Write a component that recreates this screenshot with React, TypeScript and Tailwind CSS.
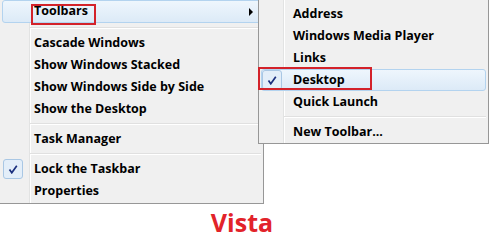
import type { ReactNode } from "react";

const gutterLeft =
  "bg-[linear-gradient(to_right,#f0f0f0_29px,#e2e3e3_29px,#e2e3e3_30px,#ffffff_30px,#ffffff_31px,#f0f0f0_31px)]";
const gutterSub =
  "bg-[linear-gradient(to_right,#f0f0f0_24px,#e2e3e3_24px,#e2e3e3_25px,#ffffff_25px,#ffffff_26px,#f0f0f0_26px)]";

function Check() {
  return (
    <svg width="10" height="9" viewBox="0 0 10 9">
      <path d="M1.5 4.5 L3.8 7.8 L8.8 0.8" fill="none" stroke="#1b2f7e" strokeWidth="1.7" />
    </svg>
  );
}

function Item({
  children,
  hot,
  check,
  box,
  arrow,
  h = "h-[22px]",
}: {
  children: ReactNode;
  hot?: boolean;
  check?: boolean;
  box?: boolean;
  arrow?: boolean;
  h?: string;
}) {
  return (
    <div
      className={`${h} mx-[2px] flex items-center border rounded-[3px] ${
        hot
          ? "border-[#b3d3ef] bg-[linear-gradient(to_bottom,#eef6fd,#dceaf7)]"
          : "border-transparent"
      }`}
    >
      {check && (
        <div
          className={`w-[20px] h-[20px] flex items-center justify-center rounded-[3px] ${
            box ? "border border-[#a9c7e4] bg-[#e3eef9]" : ""
          }`}
        >
          <Check />
        </div>
      )}
      <span className={check ? "pl-[11px]" : "pl-[31px]"}>{children}</span>
      {arrow && (
        <span className="ml-auto mr-[7px] w-0 h-0 border-y-[4px] border-y-transparent border-l-[4px] border-l-black" />
      )}
    </div>
  );
}

function Sep({ h = "h-[8px]", pl = "pl-[30px]" }: { h?: string; pl?: string }) {
  return (
    <div className={`${h} ${pl} pr-[2px] flex flex-col justify-center`}>
      <div className="h-px bg-[#e0e0e0]" />
      <div className="h-px bg-white" />
    </div>
  );
}

export default function App() {
  return (
    <div
      className="w-[490px] h-[241px] bg-white relative overflow-hidden text-[12.5px] font-bold text-black"
      style={{ fontFamily: '"Open Sans", sans-serif' }}
    >
      <div className={`w-[264px] h-[204px] border-r border-b border-[#979797] ${gutterLeft}`}>
        <Item hot arrow h="h-[23px]">
          Toolbars
        </Item>
        <Sep h="h-[9px]" />
        <Item>Cascade Windows</Item>
        <Item>Show Windows Stacked</Item>
        <Item>Show Windows Side by Side</Item>
        <Item>Show the Desktop</Item>
        <Sep />
        <Item>Task Manager</Item>
        <Sep />
        <Item check box>
          Lock the Taskbar
        </Item>
        <Item>Properties</Item>
      </div>

      <div className="flex justify-center mt-[3px]">
        <span className="text-[25px] leading-[30px] text-[#e2232a] mr-[6px]">Vista</span>
      </div>

      {/* submenu */}
      <div
        className={`absolute left-[258px] top-0 w-[231px] h-[144px] pt-[3px] border-l border-r border-b border-[#979797] ${gutterSub}`}
      >
        <Item>Address</Item>
        <Item>Windows Media Player</Item>
        <Item>Links</Item>
        <Item hot check box>
          Desktop
        </Item>
        <Item>Quick Launch</Item>
        <Sep pl="pl-[25px]" />
        <Item>New Toolbar...</Item>
      </div>

      {/* red annotation boxes */}
      <div className="absolute left-[31px] top-[4px] w-[65px] h-[21px] border-2 border-[#d3222a]" />
      <div className="absolute left-[258px] top-[67px] w-[114px] h-[23px] border-2 border-[#d3222a]" />
    </div>
  );
}
